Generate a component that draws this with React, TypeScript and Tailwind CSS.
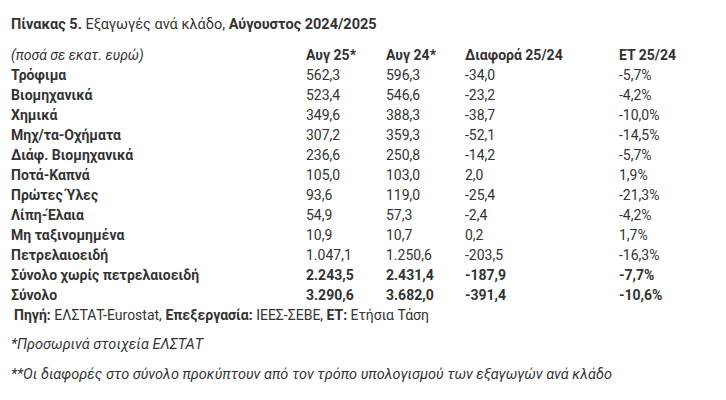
import React from "react";

type Row = { label: string; a: string; b: string; d: string; e: string; bold?: boolean };

const rows: Row[] = [
  { label: "Τρόφιμα", a: "562,3", b: "596,3", d: "-34,0", e: "-5,7%" },
  { label: "Βιομηχανικά", a: "523,4", b: "546,6", d: "-23,2", e: "-4,2%" },
  { label: "Χημικά", a: "349,6", b: "388,3", d: "-38,7", e: "-10,0%" },
  { label: "Μηχ/τα-Οχήματα", a: "307,2", b: "359,3", d: "-52,1", e: "-14,5%" },
  { label: "Διάφ. Βιομηχανικά", a: "236,6", b: "250,8", d: "-14,2", e: "-5,7%" },
  { label: "Ποτά-Καπνά", a: "105,0", b: "103,0", d: "2,0", e: "1,9%" },
  { label: "Πρώτες Ύλες", a: "93,6", b: "119,0", d: "-25,4", e: "-21,3%" },
  { label: "Λίπη-Έλαια", a: "54,9", b: "57,3", d: "-2,4", e: "-4,2%" },
  { label: "Μη ταξινομημένα", a: "10,9", b: "10,7", d: "0,2", e: "1,7%" },
  { label: "Πετρελαιοειδή", a: "1.047,1", b: "1.250,6", d: "-203,5", e: "-16,3%" },
  { label: "Σύνολο χωρίς πετρελαιοειδή", a: "2.243,5", b: "2.431,4", d: "-187,9", e: "-7,7%", bold: true },
  { label: "Σύνολο", a: "3.290,6", b: "3.682,0", d: "-391,4", e: "-10,6%", bold: true },
];

const grid = "grid grid-cols-[295px_80px_79px_154px_1fr] h-[20px] leading-[20px] whitespace-nowrap";

export default function App() {
  return (
    <div
      className="w-[726px] h-[400px] bg-white text-[#333333] text-[14px] pl-[11px] pt-[15px]"
      style={{ fontFamily: "Roboto, 'Noto Sans', sans-serif" }}
    >
      <div className="leading-[20px] text-[14.5px] whitespace-nowrap">
        <span className="font-bold">Πίνακας 5.</span> Εξαγωγές ανά κλάδο,{" "}
        <span className="font-bold">Αύγουστος 2024/2025</span>
      </div>
      <div className="mt-[10px]">
        <div className={grid}>
          <div className="italic">(ποσά σε εκατ. ευρώ)</div>
          <div className="font-bold">Αυγ 25*</div>
          <div className="font-bold">Αυγ 24*</div>
          <div className="font-bold">Διαφορά 25/24</div>
          <div className="font-bold">ΕΤ 25/24</div>
        </div>
        {rows.map((r) => (
          <div key={r.label} className={grid}>
            <div className="font-bold">{r.label}</div>
            <div className={r.bold ? "font-bold" : ""}>{r.a}</div>
            <div className={r.bold ? "font-bold" : ""}>{r.b}</div>
            <div className={r.bold ? "font-bold" : ""}>{r.d}</div>
            <div className={r.bold ? "font-bold" : ""}>{r.e}</div>
          </div>
        ))}
      </div>
      <div className="leading-[20px] pl-[3px] whitespace-nowrap">
        <span className="font-bold">Πηγή:</span> ΕΛΣΤΑΤ-Eurostat,{" "}
        <span className="font-bold">Επεξεργασία:</span> ΙΕΕΣ-ΣΕΒΕ,{" "}
        <span className="font-bold">ΕΤ:</span> Ετήσια Τάση
      </div>
      <div className="mt-[10px] leading-[20px] text-[14.5px] italic whitespace-nowrap">*Προσωρινά στοιχεία ΕΛΣΤΑΤ</div>
      <div className="mt-[10px] leading-[20px] text-[14.5px] italic whitespace-nowrap">
        **Οι διαφορές στο σύνολο προκύπτουν από τον τρόπο υπολογισμού των εξαγωγών ανά κλάδο
      </div>
    </div>
  );
}
